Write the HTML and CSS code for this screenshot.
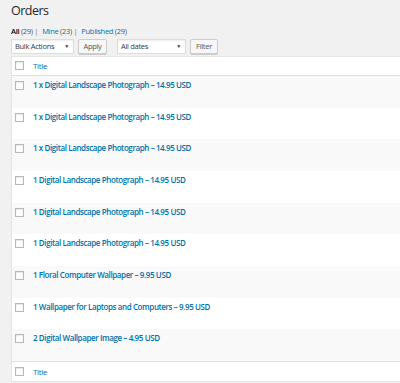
FILE: index.html
```html
<!DOCTYPE html>
<html lang="en">
<head>
    <meta charset="UTF-8">
    <title>Orders</title>
    <link rel="stylesheet" href="styles.css">
</head>
<body>
    <div class="wrap">
        <h1>Orders</h1>

        <ul class="subsubsub">
            <li><a class="current">All <span class="count">(29)</span></a> |</li>
            <li><a>Mine <span class="count">(23)</span></a> |</li>
            <li><a>Published <span class="count">(29)</span></a></li>
        </ul>

        <div class="tablenav">
            <div class="select bulk">Bulk Actions <span class="arrow">▼</span></div>
            <div class="button apply">Apply</div>
            <div class="select dates">All dates <span class="arrow">▼</span></div>
            <div class="button filter">Filter</div>
        </div>

        <table class="list">
            <thead>
                <tr>
                    <th class="cb"><span class="check"></span></th>
                    <th class="title"><a>Title</a></th>
                </tr>
            </thead>
            <tbody>
                <tr><td class="cb"><span class="check"></span></td><td class="title"><a>1 x Digital Landscape Photograph – 14.95 USD</a></td></tr>
                <tr><td class="cb"><span class="check"></span></td><td class="title"><a>1 x Digital Landscape Photograph – 14.95 USD</a></td></tr>
                <tr><td class="cb"><span class="check"></span></td><td class="title"><a>1 x Digital Landscape Photograph – 14.95 USD</a></td></tr>
                <tr><td class="cb"><span class="check"></span></td><td class="title"><a>1 Digital Landscape Photograph – 14.95 USD</a></td></tr>
                <tr><td class="cb"><span class="check"></span></td><td class="title"><a>1 Digital Landscape Photograph – 14.95 USD</a></td></tr>
                <tr><td class="cb"><span class="check"></span></td><td class="title"><a>1 Digital Landscape Photograph – 14.95 USD</a></td></tr>
                <tr><td class="cb"><span class="check"></span></td><td class="title"><a>1 Floral Computer Wallpaper – 9.95 USD</a></td></tr>
                <tr><td class="cb"><span class="check"></span></td><td class="title"><a>1 Wallpaper for Laptops and Computers – 9.95 USD</a></td></tr>
                <tr><td class="cb"><span class="check"></span></td><td class="title"><a>2 Digital Wallpaper Image – 4.95 USD</a></td></tr>
            </tbody>
            <tfoot>
                <tr>
                    <th class="cb"><span class="check"></span></th>
                    <th class="title"><a>Title</a></th>
                </tr>
            </tfoot>
        </table>
    </div>
</body>
</html>
```

FILE: styles.css
```css
body {
    margin: 0;
    background: #f1f1f1;
    color: #444;
    font-family: "Open Sans", "Noto Sans", sans-serif;
    font-size: 8px;
}
a {
    color: #0073aa;
}
.wrap {
    padding-left: 11px;
    overflow: hidden;
}
h1 {
    margin: 0;
    padding-top: 2px;
    font-size: 12.5px;
    font-weight: 400;
    line-height: 18px;
    letter-spacing: -0.5px;
    color: #23282d;
}
.subsubsub {
    list-style: none;
    margin: 6px 0 0;
    padding: 0;
    display: flex;
    gap: 4px;
    font-size: 7.5px;
    line-height: 11px;
    letter-spacing: -0.3px;
    color: #777;
}
.subsubsub a.current {
    color: #000;
    font-weight: 600;
}
.count {
    color: #555;
    font-weight: 400;
}
.tablenav {
    display: flex;
    margin-top: 2px;
    height: 15px;
}
.select {
    box-sizing: border-box;
    height: 15px;
    background: #fff;
    border: 1px solid #ddd;
    box-shadow: inset 0 1px 2px rgba(0, 0, 0, 0.07);
    color: #32373c;
    font-size: 7.5px;
    letter-spacing: -0.3px;
    line-height: 13px;
    padding: 0 4px 0 3px;
    display: flex;
    justify-content: space-between;
}
.arrow {
    font-size: 5px;
    color: #333;
}
.bulk { width: 63px; }
.dates { width: 69px; margin-left: 10px; }
.button {
    box-sizing: border-box;
    height: 15px;
    margin-left: 4px;
    background: #f7f7f7;
    border: 1px solid #ccc;
    border-radius: 2px;
    box-shadow: 0 1px 0 #ccc;
    color: #555;
    font-size: 7.5px;
    letter-spacing: -0.3px;
    line-height: 13px;
    text-align: center;
}
.apply { width: 29px; }
.filter { width: 28px; }
.list {
    margin-top: 2px;
    width: 400px;
    border-collapse: separate;
    border-spacing: 0;
    background: #fff;
    border: 1px solid #e5e5e5;
    box-shadow: 0 1px 1px rgba(0, 0, 0, 0.04);
}
.list th, .list td {
    padding: 0;
    text-align: left;
    vertical-align: top;
}
.list thead tr {
    height: 19px;
}
.list tfoot tr {
    height: 20px;
}
.list thead th {
    border-bottom: 1px solid #e1e1e1;
}
.list tfoot th {
    border-top: 1px solid #e1e1e1;
}
.list th.title {
    font-weight: 400;
    font-size: 8px;
    letter-spacing: -0.3px;
    line-height: 18px;
}
.list tfoot th.title {
    line-height: 19px;
}
.list th.title a, .list td.title a {
    text-decoration: none;
}
.list tbody tr {
    height: 31.67px;
}
.list tbody tr:nth-child(odd) {
    background: #f9f9f9;
}
.list td.title {
    font-size: 8px;
    font-weight: 600;
    letter-spacing: -0.4px;
    line-height: 11px;
    padding-top: 3px;
}
.cb {
    width: 21px;
}
.check {
    display: block;
    box-sizing: border-box;
    width: 9px;
    height: 9px;
    margin: 5px 0 0 3px;
    background: #fff;
    border: 1px solid #b4b9be;
    box-shadow: inset 0 1px 2px rgba(0, 0, 0, 0.1);
}
thead .check {
    margin-top: 4px;
}
```
